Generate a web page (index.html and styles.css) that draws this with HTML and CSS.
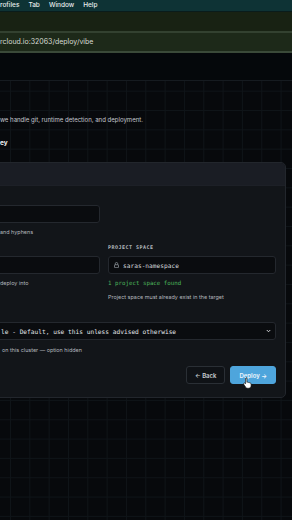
FILE: index.html
```html
<!DOCTYPE html>
<html lang="en">
<head>
    <meta charset="UTF-8">
    <meta name="viewport" content="width=device-width, initial-scale=1.0">
    <title>Deploy · vibe</title>
    <link rel="stylesheet" href="styles.css">
</head>
<body>
    <div class="menubar">
        <span>rofiles</span>
        <span>Tab</span>
        <span>Window</span>
        <span>Help</span>
    </div>
    <div class="tabstrip"></div>
    <div class="addressbar">rcloud.io:32063/deploy/vibe</div>
    <header class="topbar"></header>

    <main class="canvas">
        <div class="page">
            <p class="intro">we handle git, runtime detection, and deployment.</p>
            <p class="step">ey</p>

            <section class="card">
                <div class="card-head"></div>
                <div class="card-body">
                    <div class="fields">
                        <div class="field cut">
                            <span class="label"></span>
                            <div class="input"></div>
                            <p class="hint">and hyphens</p>
                        </div>
                        <div class="field"></div>

                        <div class="field cut">
                            <span class="label"></span>
                            <div class="input"></div>
                            <p class="hint">deploy into</p>
                        </div>
                        <div class="field">
                            <span class="label">PROJECT SPACE</span>
                            <div class="input">
                                <svg class="lock" width="5" height="6" viewBox="0 0 10 12">
                                    <path d="M2.5 5.5V3.5a2.5 2.5 0 0 1 5 0v2" fill="none" stroke="#9aa0a6" stroke-width="1.4"/>
                                    <rect x="1" y="5.5" width="8" height="5.8" rx="1" fill="none" stroke="#9aa0a6" stroke-width="1.4"/>
                                </svg>
                                <span>saras-namespace</span>
                            </div>
                            <p class="status">1 project space found</p>
                            <p class="hint">Project space must already exist in the target</p>
                        </div>

                        <div class="field cut wide">
                            <span class="label"></span>
                            <div class="input select">
                                <span>le - Default, use this unless advised otherwise</span>
                                <svg width="5" height="4" viewBox="0 0 10 8">
                                    <path d="M1.5 2l3.5 3.5 3.5-3.5" fill="none" stroke="#e4e7ea" stroke-width="1.8"/>
                                </svg>
                            </div>
                            <p class="hint indent">on this cluster — option hidden</p>
                        </div>
                    </div>

                    <div class="actions">
                        <button class="btn">← Back</button>
                        <button class="btn primary">Deploy →</button>
                        <svg class="cursor" width="9" height="12" viewBox="0 0 18 24">
                            <path d="M6 1.5c1 0 1.8.8 1.8 1.8v7.2l1-.3c1-.2 1.8.3 2 1l.8-.2c1-.2 1.8.3 2 1.1l.6-.1c1.1-.1 2 .7 2 1.8v3.7c0 2.7-2.200 5-5 5H9.2c-1.6 0-3-.8-3.9-2.1L1.5 14.6c-.6-.9-.3-2 .6-2.5.8-.4 1.700-.2 2.2.5l.8 1.1V3.3c0-1 .8-1.8 1.8-1.8z" fill="#fff" stroke="#111" stroke-width="1.3"/>
                        </svg>
                    </div>
                </div>
            </section>
        </div>
    </main>
</body>
</html>
```

FILE: styles.css
```css
body {
    margin: 0;
    background-color: #07090c;
    font-family: Inter, "Noto Sans", sans-serif;
    color: #c3c7cc;
    overflow: hidden;
}

/* browser chrome */

.menubar {
    display: flex;
    gap: 9px;
    height: 11px;
    background-color: #0e3335;
    border-bottom: 1px solid #0a1c1b;
    font-size: 6.5px;
    line-height: 11px;
    font-weight: 500;
    color: #e9eded;
}

.tabstrip {
    height: 19px;
    background-color: #182213;
    border-bottom: 2px solid #334130;
}

.addressbar {
    height: 18px;
    background-color: #1d2919;
    border-bottom: 2px solid #3b4a39;
    font-size: 7px;
    line-height: 18px;
    color: #d7dbd3;
    white-space: nowrap;
}

.topbar {
    height: 27px;
    background-color: #05080b;
    border-bottom: 1px solid #161b20;
}

/* page */

.canvas {
    min-height: 439px;
    background-color: #07090c;
    background-image:
        linear-gradient(to right, #0f1418 1px, transparent 1px),
        linear-gradient(to bottom, #0f1418 1px, transparent 1px);
    background-size: 19.33px 19.33px;
    background-position: 10px 9.7px;
    overflow: hidden;
}

.page {
    margin-right: 6px;
    padding-top: 34px;
}

.intro {
    margin: 0;
    font-size: 6.05px;
    line-height: 9px;
    white-space: nowrap;
}

.step {
    margin: 16px 0 0;
    font-size: 6.5px;
    line-height: 7px;
    font-weight: 700;
    color: #f0f2f4;
}

.card {
    margin-top: 15px;
    margin-left: -9px;
    background-color: #121519;
    border: 1px solid #22262c;
    border-radius: 5px;
    overflow: hidden;
}

.card-head {
    height: 22px;
    background-color: #1a1d24;
    border-bottom: 1px solid #1d2027;
}

.card-body {
    padding: 7px 9px 13px 8px;
}

.fields {
    display: grid;
    grid-template-columns: 100px 1fr;
    column-gap: 8px;
    row-gap: 8px;
}

.field.wide {
    grid-column: 1 / 3;
    margin-top: 1.5px;
}

.label {
    display: block;
    min-height: 7px;
    margin-bottom: 5px;
    font-family: "DejaVu Sans Mono", monospace;
    font-size: 5px;
    line-height: 7px;
    font-weight: 700;
    letter-spacing: 0.5px;
    color: #b3b8be;
}

.input {
    display: flex;
    align-items: center;
    gap: 4px;
    height: 16px;
    padding: 0 5px;
    background-color: #0a0c0f;
    border: 1px solid #24282e;
    border-radius: 3px;
    font-family: "DejaVu Sans Mono", monospace;
    font-size: 6.2px;
    color: #d3d7db;
    white-space: nowrap;
}

.field.cut .input {
    margin-left: -10px;
}

.select {
    justify-content: space-between;
    padding: 0 4px 0 10px;
    color: #e1e4e7;
}

.hint {
    margin: 6px 0 0;
    font-size: 5.45px;
    line-height: 7px;
    color: #b4b9be;
    white-space: nowrap;
}

.hint.indent {
    margin-top: 6.5px;
    padding-left: 2px;
}

.status {
    margin: 6px 0 0;
    font-family: "DejaVu Sans Mono", monospace;
    font-size: 5.8px;
    line-height: 7px;
    color: #4bb35a;
}

.status + .hint {
    margin-top: 6.5px;
}

.actions {
    position: relative;
    display: flex;
    justify-content: flex-end;
    gap: 5px;
    margin-top: 12.5px;
}

.btn {
    height: 18px;
    padding: 0 8px;
    background-color: #0f1216;
    border: 1px solid #2a2f35;
    border-radius: 3px;
    font-family: Inter, sans-serif;
    font-size: 6px;
    font-weight: 600;
    color: #c9ced4;
    cursor: pointer;
}

.btn.primary {
    background-color: #4ea5dc;
    border-color: #4ea5dc;
    color: #eef6fc;
}

.cursor {
    position: absolute;
    right: 24px;
    top: 11px;
}
```
